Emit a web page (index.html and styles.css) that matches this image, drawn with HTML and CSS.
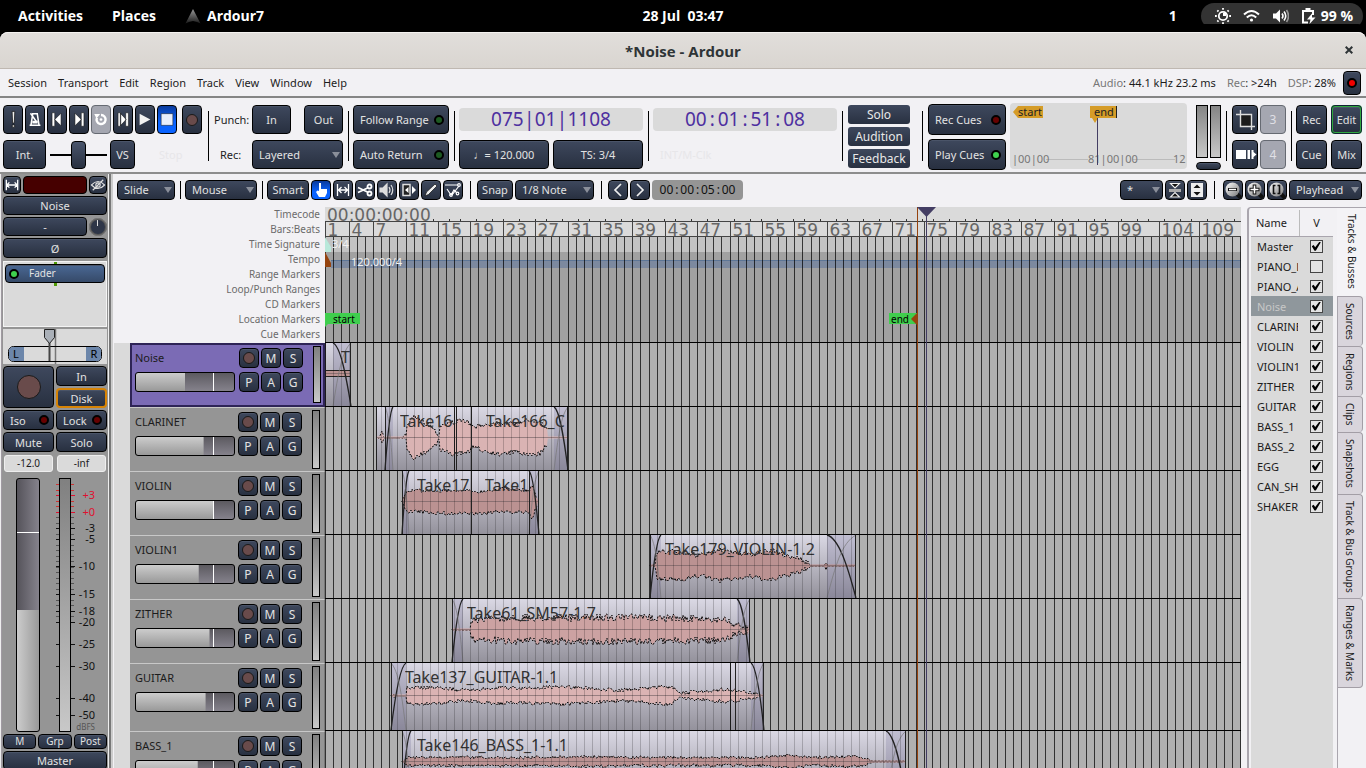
FILE: index.html
```html
<!DOCTYPE html>
<html lang="en">
<head>
<meta charset="utf-8">
<title>*Noise - Ardour</title>
<link rel="stylesheet" href="styles.css">
</head>
<body>
<header class="shell">
  <nav class="shell-left">
    <span>Activities</span><span>Places</span>
    <span class="app"><svg width="16" height="16" viewBox="0 0 16 16"><defs><linearGradient id="lg" x1="0" y1="0" x2="0" y2="1"><stop offset="0" stop-color="#999"/><stop offset="1" stop-color="#1a1a1a"/></linearGradient></defs><path d="M8 1L15.500 15.500L12 14L8 13L4 14L.5 15.500Z" fill="url(#lg)"/></svg>Ardour7</span>
  </nav>
  <time class="shell-clock">28 Jul&nbsp; 03:47</time>
  <div class="shell-right">
    <span>1</span>
    <span class="pill">
      <svg width="16" height="16" viewBox="0 0 16 16" fill="none" stroke="#fff"><circle cx="8" cy="8" r="4.200" stroke-width="1.800"/><path d="M8 5v3h3v-3z" fill="#fff" stroke="none"/><path d="M8 0v1.800M8 14.200v1.800M0 8h1.800M14.200 8h1.800M2.300 2.300l1.200 1.200M12.500 12.500l1.200 1.200M2.300 13.700l1.200-1.200M12.500 3.500l1.200-1.200" stroke-width="1.800"/></svg>
      <svg width="17" height="16" viewBox="0 0 17 16" fill="none" stroke="#fff" stroke-width="2"><path d="M1 6.500Q8.500-.5 16 6.500M3.800 9.500Q8.500 5 13.200 9.500"/><circle cx="8.500" cy="12" r="1.600" fill="#fff" stroke="none"/></svg>
      <svg width="17" height="16" viewBox="0 0 17 16" fill="none" stroke="#fff" stroke-width="1.600"><path d="M1 5.500h3l4-4v13l-4-4H1z" fill="#fff" stroke="none"/><path d="M10 5.500q2 2.500 0 5M12 3.500q3.500 4.500 0 9"/><path d="M14.500 2q4 6 0 12" stroke="#999"/></svg>
      <svg width="15" height="16" viewBox="0 0 15 16" fill="none" stroke="#fff" stroke-width="2"><path d="M7 14.500H2V3h10v4"/><path d="M4.500 1.200h5" stroke-width="2.400"/><path d="M11 5.500l-5 6h3.500l-1 4.500 6-6.500H11z" fill="#fff" stroke="none"/></svg>
      99 %
    </span>
  </div>
</header>
<div class="titlebar"><h1>*Noise - Ardour</h1><button class="close" aria-label="Close"><svg width="8" height="8" viewBox="0 0 8 8" stroke="#2e3436" stroke-width="2"><path d="M.7.7l6.600 6.600M7.300.7L.7 7.300"/></svg></button></div>
<div class="menubar">
  <nav class="menus"><button>Session</button><button>Transport</button><button>Edit</button><button>Region</button><button>Track</button><button>View</button><button>Window</button><button>Help</button></nav>
  <div class="status"><span><i>Audio</i>: 44.1 kHz 23.2 ms</span><span><i>Rec</i>: &gt;24h</span><span><i>DSP</i>: 28%</span><button class="btn led-btn" aria-label="Error log"><b class="led red"></b></button></div>
</div>

<section class="transport">
  <div class="group rolls">
    <div class="row">
      <button class="btn sq" aria-label="Panic"><svg viewBox="0 0 20 28"><path d="M9 5h3l-.6 13h-1.800zM9.200 20h2.600v2.500H9.200z" fill="#eee" stroke="#111" stroke-width=".8"/></svg></button>
      <button class="btn sq" aria-label="Metronome"><svg viewBox="0 0 20 28" fill="none" stroke="#fff" stroke-width="1.700"><path d="M7.500 7.500h5l2 13h-9zM4 20.500h12M12 17L5 7"/><path d="M7 17h6" stroke-width="3"/></svg></button>
      <button class="btn sq" aria-label="Go to start"><svg viewBox="0 0 20 28" fill="#fff" stroke="#111" stroke-width=".6"><path d="M4.500 6.500h3v15h-3zM14.500 7v14L7.500 14z"/></svg></button>
      <button class="btn sq" aria-label="Go to end"><svg viewBox="0 0 20 28" fill="#fff" stroke="#111" stroke-width=".6"><path d="M12.500 6.500h3v15h-3zM5.500 7v14l7-7z"/></svg></button>
      <button class="btn sq off" aria-label="Loop"><svg viewBox="0 0 20 28" fill="none" stroke="#fff" stroke-width="2.600"><path d="M5.500 12a5 5 0 1 0 4.500-3"/><circle cx="10" cy="14" r="1.500" fill="#fff" stroke="none"/><path d="M2.500 8l6.500 0-4 5z" fill="#fff" stroke="none"/></svg></button>
      <button class="btn sq" aria-label="Play range"><svg viewBox="0 0 20 28" fill="#fff" stroke="#111" stroke-width=".6"><path d="M4.500 6.500h3v15h-3zM13 6.500h3v15h-3zM7 7v14l6.500-7z"/></svg></button>
      <button class="btn sq" aria-label="Play"><svg viewBox="0 0 20 28"><path d="M4 7.500v13L16 14z" fill="#f2f2f2"/></svg></button>
      <button class="btn sq active" aria-label="Stop"><svg viewBox="0 0 20 28"><path d="M3.500 7.500h13v13h-13z" fill="#e8eefc" stroke="#222" stroke-width=".6"/></svg></button>
      <button class="btn sq rec" aria-label="Record"><b class="dot"></b></button>
    </div>
    <div class="row">
      <button class="btn int">Int.</button>
      <input class="shuttle" type="range" value="50" aria-label="Shuttle speed">
      <button class="btn vs">VS</button>
      <span class="ghost stop">Stop</span>
    </div>
  </div>
  <i class="sep"></i>
  <div class="group punch">
    <div class="row"><span class="lab">Punch:</span><button class="btn io">In</button><button class="btn io out">Out</button></div>
    <div class="row"><label class="lab" for="recmode">Rec:</label><span class="sel wide"><select id="recmode"><option>Layered</option></select></span></div>
  </div>
  <i class="sep"></i>
  <div class="group follow"><button class="btn lamp">Follow Range<b class="led dgreen"></b></button><button class="btn lamp">Auto Return<b class="led dgreen"></b></button></div>
  <i class="sep"></i>
  <div class="group clocks"><div class="clock">075<s>|</s>01<s>|</s>1108</div><div class="row pair"><button class="btn">♩= 120.000</button><button class="btn">TS: 3/4</button></div></div>
  <i class="sep"></i>
  <div class="group clocks"><div class="clock">00<s>:</s>01<s>:</s>51<s>:</s>08</div><span class="ghost mclk">INT/M-Clk</span></div>
  <i class="sep"></i>
  <div class="group alerts"><button>Solo</button><button>Audition</button><button>Feedback</button></div>
  <i class="sep cue-sep"></i>
  <div class="group cues"><button class="btn lamp">Rec Cues<b class="led dred"></b></button><button class="btn lamp">Play Cues<b class="led green"></b></button></div>
  <div class="mini">
    <svg width="100%" height="66" font-size="11">
      <path d="M36 56.500h42M123 56.500h42" stroke="#bbb"/>
      <g fill="#777"><text x="2" y="60">|00|00</text><text x="78" y="60">81|00|00</text><text x="163" y="60">12</text></g>
      <path d="M3 9l5-6h25v12H8zM80 3h27v12H88l-3 5-3-5h-2z" fill="#d59c28"/><path d="M106.500 3v12" stroke="#222"/>
      <g fill="#222"><text x="8" y="13">start</text><text x="84" y="13">end</text></g>
      <path d="M87.500 15v47" stroke="#433d63"/>
    </svg>
  </div>
  <div class="meters"><div class="row"><i></i><i></i></div><button class="btn peak" aria-label="Peak"></button></div>
  <i class="sep"></i>
  <div class="group quad">
    <button class="btn" aria-label="Crop"><svg width="24" height="26" viewBox="0 0 24 26"><path d="M7 7h11v12H7z" fill="#1b1b1b"/><path d="M3 7.500h15.500V23M7.500 3v16.500H22" fill="none" stroke="#ddd" stroke-width="1.400"/></svg></button><button class="btn off">3</button>
    <button class="btn" aria-label="Cue layout"><svg width="24" height="26" viewBox="0 0 24 26" fill="#fff"><path d="M3 8h10v9H3zM14.500 8h2.500v9h-2.500zM18.500 8h2v2l3 2.500-3 2.500v2h-2z"/></svg></button><button class="btn off">4</button>
  </div>
  <i class="sep"></i>
  <div class="group pages"><button class="btn">Rec</button><button class="btn on-green">Edit</button><button class="btn">Cue</button><button class="btn">Mix</button></div>
</section>

<main>
  <aside class="strip">
    <div class="row g2 top"><button class="btn mini-b" aria-label="Strip width"><svg viewBox="0 0 18 16" fill="none" stroke="#fff" stroke-width="1.500"><path d="M2.500 2v12M15.500 2v12M3 8h12M6 5L3 8l3 3M12 5l3 3-3 3"/></svg></button><button class="btn color" aria-label="Track colour"></button><button class="btn mini-b" aria-label="Hide"><svg viewBox="0 0 18 16" fill="none" stroke="#ddd" stroke-width="1.300"><path d="M1.500 8Q9 0 16.500 8Q9 16 1.500 8zM3 14L15 2"/><circle cx="9" cy="8" r="2.500"/></svg></button></div>
    <button class="btn h19">Noise</button>
    <div class="row g2"><button class="btn h19 grow">-</button><input type="range" class="knob" aria-label="Trim"></div>
    <button class="btn h19 phase">Ø</button>
    <div class="procs"><button class="btn lamp fader-proc"><b class="led green"></b>Fader</button></div>
    <div class="pan"><svg width="104" height="35" font-size="11" text-anchor="middle"><path d="M52.500 0v35" stroke="#777" stroke-width="1.500"/><rect x="5.500" y="17.500" width="93" height="15" rx="5" fill="none" stroke="#000"/><path d="M21 18H10q-4 0-4 4v6q0 4 4 4h11z" fill="#6c86aa"/><path d="M83 18h11q4 0 4 4v6q0 4-4 4H83z" fill="#6c86aa"/><path d="M21 17.500h62M21 32.500h62" stroke="#000"/><path d="M46.500 14v18" stroke="#444" stroke-width="2"/><path d="M41.500.5h10v8l-5 6-5-6z" fill="#aab0b8" stroke="#222"/><text x="13" y="29">L</text><text x="91" y="29">R</text></svg></div>
    <div class="recgrid"><button class="btn bigrec" aria-label="Record arm"><b class="dot big"></b></button><button class="btn">In</button><button class="btn on-orange">Disk</button></div>
    <div class="two"><button class="btn lamp">Iso<b class="led dred"></b></button><button class="btn lamp">Lock<b class="led dred"></b></button><button class="btn">Mute</button><button class="btn">Solo</button></div>
    <div class="two vals"><input value="-12.0" aria-label="Gain"><input value="-inf" aria-label="Peak level"></div>
    <div class="faders"><input type="range" class="vfader" value="48" aria-label="Fader level"><svg id="scale" width="50" height="254"></svg></div>
    <div class="three"><button class="btn">M</button><button class="btn">Grp</button><button class="btn">Post</button></div>
    <button class="btn h19">Master</button>
  </aside>

  <section class="editor">
    <div class="tools">
      <span class="sel s58"><select aria-label="Edit mode"><option>Slide</option></select></span><i class="sep"></i>
      <span class="sel s72"><select aria-label="Edit point"><option>Mouse</option></select></span><i class="sep"></i>
      <div class="row g2"><button class="btn s42">Smart</button>
      <button class="btn ic active" aria-label="Grab"><svg viewBox="0 0 20 20"><path d="M8 3h2v6h6v4l-2 4H8l-3-5 1.500-1.500L8 11z" fill="#fff"/></svg></button>
      <button class="btn ic" aria-label="Range"><svg viewBox="0 0 20 20" fill="none" stroke="#fff" stroke-width="1.300"><path d="M4.500 4v12M15.500 4v12M6 10h8M8.500 7L5.500 10l3 3M11.500 7l3 3-3 3"/></svg></button>
      <button class="btn ic" aria-label="Cut"><svg viewBox="0 0 20 20" fill="none" stroke="#fff" stroke-width="1.800"><circle cx="14.500" cy="6.500" r="2"/><circle cx="14.500" cy="13.500" r="2"/><path d="M12.500 8L3 12.500M12.500 12L3 7.500"/></svg></button>
      <button class="btn ic" aria-label="Audition"><svg viewBox="0 0 20 20" fill="none" stroke="#ddd" stroke-width="1.200"><path d="M3 8h3l4-4v12l-4-4H3z" fill="#ddd"/><path d="M12 7q2 3 0 6M14 5q3.500 5 0 10"/></svg></button>
      <button class="btn ic" aria-label="Stretch"><svg viewBox="0 0 20 20"><path d="M4 4.500h7v11H4z" fill="#222" stroke="#ddd" stroke-width="1.500"/><path d="M9.500 7v6l-3.500-3zM13 6v8l4-4z" fill="#fff"/></svg></button>
      <button class="btn ic" aria-label="Draw"><svg viewBox="0 0 20 20"><path d="M4 16l1.500-4L14 4l2 2-8.500 8.500z" fill="#eee" stroke="#111" stroke-width=".7"/></svg></button>
      <button class="btn ic" aria-label="Internal edit"><svg viewBox="0 0 20 20" fill="none" stroke="#fff" stroke-width="1.200"><path d="M2 5h13M4 9l4 6 3-5 3 3M9 15l7-9"/><circle cx="16" cy="5" r="1.300"/><circle cx="8" cy="15" r="1.300"/><circle cx="14.500" cy="13.500" r="1.300"/></svg></button></div>
      <i class="sep w6"></i>
      <div class="row g2"><button class="btn s36">Snap</button><span class="sel s79"><select aria-label="Grid"><option>1/8 Note</option></select></span></div>
      <i class="sep w6"></i>
      <div class="row g2"><button class="btn ic" aria-label="Nudge back"><svg viewBox="0 0 20 20"><path d="M13 4l-6 6 6 6" fill="none" stroke="#eee" stroke-width="1.700"/></svg></button><button class="btn ic" aria-label="Nudge forward"><svg viewBox="0 0 20 20"><path d="M7 4l6 6-6 6" fill="none" stroke="#eee" stroke-width="1.700"/></svg></button><div class="nudge">00<s>:</s>00<s>:</s>05<s>:</s>00</div></div>
      <div class="row g2 right"><span class="sel s43"><select aria-label="Visible tracks"><option>*</option></select></span>
      <button class="btn ic" aria-label="Shrink tracks"><svg viewBox="0 0 20 20"><path d="M4 9h12v3H4z" fill="#aaa"/><path d="M5.500 3.500h9L10 8zM5.500 17h9L10 12.500z" fill="#111" stroke="#eee" stroke-width="1.100"/></svg></button>
      <button class="btn ic" aria-label="Expand tracks"><svg viewBox="0 0 20 20"><path d="M4 3h12v14H4z" fill="#eee"/><path d="M6.500 8h7L10 4.500zM6.500 12h7L10 15.500z" fill="#111"/></svg></button></div>
      <i class="sep w8"></i>
      <div class="row g2"><button class="btn ic" aria-label="Zoom out"><svg viewBox="0 0 20 20"><defs><linearGradient id="zg" x1="0" y1="0" x2="1" y2="1"><stop offset="0" stop-color="#fff"/><stop offset="1" stop-color="#777"/></linearGradient></defs><path d="M13 13l5 5" stroke="#111" stroke-width="4"/><circle cx="9.500" cy="9.500" r="7" fill="url(#zg)"/><path d="M5 9.500h9" stroke="#111" stroke-width="3"/><path d="M6 9.500h7" stroke="#fff" stroke-width="1.300"/></svg></button>
      <button class="btn ic" aria-label="Zoom in"><svg viewBox="0 0 20 20"><path d="M13 13l5 5" stroke="#111" stroke-width="4"/><circle cx="9.500" cy="9.500" r="7" fill="url(#zg)"/><path d="M4.500 9.500h10M9.500 4.500v10" stroke="#111" stroke-width="3.600"/><path d="M5.500 9.500h8M9.500 5.500v8" stroke="#fff" stroke-width="1.600"/></svg></button>
      <button class="btn ic" aria-label="Zoom to session"><svg viewBox="0 0 20 20"><path d="M13 13l5 5" stroke="#111" stroke-width="4"/><circle cx="9.500" cy="9.500" r="7" fill="url(#zg)"/><path d="M8.500 5.500h-2v8h2M10.500 5.500h2v8h-2" fill="none" stroke="#111" stroke-width="1.600"/></svg></button>
      <span class="sel s73"><select aria-label="Zoom focus"><option>Playhead</option></select></span></div>
    </div>
    <div class="work">
      <div class="headers">
        <ul class="rulers"><li>Timecode</li><li>Bars:Beats</li><li>Time Signature</li><li>Tempo</li><li>Range Markers</li><li>Loop/Punch Ranges</li><li>CD Markers</li><li>Location Markers</li><li>Cue Markers</li></ul>
        <div class="tracks" id="tracks"></div>
      </div>
      <div class="canvas"><svg id="canvas" width="100%" height="100%"></svg></div>
      <aside class="side">
        <div class="listwrap"><table class="list"><thead><tr><th>Name</th><th>V</th></tr></thead><tbody id="list"></tbody></table></div>
        <div class="tabs" role="tablist"><button class="sel-tab" role="tab">Tracks &amp; Busses</button><button role="tab">Sources</button><button role="tab">Regions</button><button role="tab">Clips</button><button role="tab">Snapshots</button><button role="tab">Track &amp; Bus Groups</button><button role="tab">Ranges &amp; Marks</button></div>
      </aside>
    </div>
  </section>
</main>
<script src="app.js"></script>
</body>
</html>
```
FILE: styles.css
```css
* { box-sizing: border-box; }
body { margin: 0; height: 100vh; display: flex; flex-direction: column; overflow: hidden; background: #f2f1f4; color: #1c1c1c; font: 11px/15px "Noto Sans", "Open Sans", sans-serif; }
button, input, select { font: inherit; color: inherit; margin: 0; padding: 0; border: 0; background: none; }
svg { display: block; flex: none; }
s { text-decoration: none; }
.row { display: flex; align-items: center; }
.g2 { gap: 2px; }

.shell { flex: none; height: 32px; background: #000; color: #fff; display: grid; grid-template-columns: 1fr auto 1fr; align-items: center; font: 700 14px/20px "Open Sans", "Noto Sans", sans-serif; }
.shell-left { display: flex; gap: 29px; padding-left: 18px; }
.app { display: flex; align-items: center; gap: 6px; }
.shell-right { display: flex; justify-content: flex-end; align-items: center; gap: 24px; padding-right: 3px; }
.pill { display: flex; align-items: center; gap: 12px; height: 26px; padding: 0 10px 0 14px; border-radius: 13px; background: #333; }
.pill svg:last-of-type { margin-right: -7px; }

.titlebar { flex: none; height: 37px; display: flex; align-items: center; justify-content: center; position: relative; background: linear-gradient(#e1dedb, #d9d5d0); border-top: 1px solid #f4f2f0; border-bottom: 1px solid #bfb8b1; border-radius: 8px 8px 0 0; box-shadow: 0 -8px 0 #000; }
.titlebar h1 { margin: 0; font: 700 15px/20px "Open Sans", "Noto Sans", sans-serif; color: #2e3436; }
.close { position: absolute; right: 13px; top: 13px; }

.menubar { flex: none; height: 29px; display: flex; justify-content: space-between; align-items: center; border-bottom: 2px solid #858585; padding: 0 5px 0 8px; }
.menus { display: flex; gap: 11px; }
.status { display: flex; align-items: center; gap: 11px; }
.status i { font-style: normal; color: #777; }
.led-btn { width: 18px; height: 24px; margin-left: -4px; }

.btn { display: flex; align-items: center; justify-content: center; flex: none; background: linear-gradient(#3e485d, #283040); border: 1px solid #000; border-radius: 4px; color: #e2e2e2; box-shadow: inset 0 1px 0 #4a5468; white-space: nowrap; overflow: hidden; }
.btn.grow { flex: 1; }
.btn.active { background: linear-gradient(#0a3a9c, #0a63ff 60%); box-shadow: none; }
.btn.off { background: #a5a7b1; color: #e0e0e6; box-shadow: none; border-color: #666a72; }
.btn.on-green { border: 2px solid #2fa83f; outline: 1px solid #123; outline-offset: -1px; }
.btn.on-orange { border: 2px solid #d78405; }
.led { width: 10px; height: 10px; border-radius: 5px; border: 2px solid #000; background: #1d5a22; flex: none; }
.led.green { background: #3fd04e; }
.led.red { background: #f00000; }
.led.dred { background: #600; }
.dot { width: 12px; height: 12px; border-radius: 50%; background: #694b4b; border: 1px solid #1a1a1a; }
.dot.big { width: 24px; height: 24px; }
.lamp { justify-content: space-between; padding: 0 4px 0 6px; }
.sep { width: 1px; background: #000; align-self: center; flex: none; }

.transport { flex: none; height: 76px; display: flex; padding: 7px 4px 0 3px; border-bottom: 2px solid #8d8d8d; }
.transport .sep { height: 50px; margin: 0 4px 5px 5px; }
.transport .group { height: 64px; display: flex; flex-direction: column; gap: 6px; flex: none; }
.rolls { width: 200px; }
.transport .row { height: 29px; }
.rolls .row:first-child { gap: 2px; }
.sq { width: 20px; height: 29px; }
.sq svg { width: 18px; height: 27px; }
.rec { margin-left: 3px; }
.int { width: 43px; height: 29px; }
.vs { width: 25px; height: 29px; }
.shuttle { appearance: none; width: 57px; height: 29px; margin: 0 3px 0 4px; background: linear-gradient(#000, #000) center / 100% 2px no-repeat; }
.shuttle::-webkit-slider-thumb { appearance: none; width: 15px; height: 28px; border-radius: 4px; border: 1px solid #000; background: linear-gradient(#4a556c, #283040); }
.ghost { color: #e7e6e9; }
.stop { margin-left: 24px; }
.punch { width: 130px; }
.punch .lab { width: 39px; flex: none; padding-left: 1px; }
.punch label.lab { padding-left: 7px; }
.io { width: 39px; height: 29px; }
.out { margin-left: auto; }
.sel { position: relative; display: flex; height: 20px; flex: none; }
.sel::after { content: ""; position: absolute; right: 3px; top: 50%; margin-top: -3px; border: 4px solid transparent; border-top: 6px solid #8a8f9a; border-bottom: 0; pointer-events: none; }
.sel select { appearance: none; width: 100%; height: 100%; padding: 0 10px 0 6px; background: linear-gradient(#3e485d, #283040); border: 1px solid #000; border-radius: 4px; color: #e2e2e2; }
.wide { width: 91px; height: 29px; }
.follow { width: 96px; }
.follow .btn { height: 29px; }
.clocks { width: 184px; }
.clock { margin-top: 3px; height: 23px; border-radius: 4px; background: #dadada; color: #4d2fa0; font-size: 19px; line-height: 23px; text-align: center; }
.clock s, .nudge s { display: inline-block; width: 11px; text-align: center; }
.clocks .pair { gap: 4px; margin-top: 3px; }
.pair .btn { flex: 1; height: 29px; }
.mclk { margin: 10px 0 0 7px; }
.transport .alerts { gap: 3px; margin-left: 1px; width: 62px; }
.alerts button { height: 19px; border-radius: 3px; font-size: 12px; color: #e8e8e8; background: linear-gradient(#3e485d, #283040); }
.transport .cue-sep { margin-left: 12px; }
.transport .cues { width: 78px; gap: 4px; margin: -1px 0 0 1px; }
.cues .btn { height: 31px; }
.mini { flex: 1; min-width: 100px; margin: -2px 9px 0 4px; height: 66px; background: #dadada; border-radius: 4px; overflow: hidden; }
.meters { width: 25px; flex: none; }
.meters .row { height: 53px; gap: 2px; }
.meters i { flex: 1; height: 53px; border: 1px solid #000; background: linear-gradient(#858585, #c8c8c8); }
.peak { width: 25px; height: 8px; margin-top: 4px; }
.transport .quad, .transport .pages { display: grid; gap: 6px 2px; grid-template: 29px 29px / 26px 26px; margin-left: 1px; font-size: 12px; }
.transport .pages { grid-template-columns: 31px 31px; column-gap: 4px; margin-left: 0; font-size: 11px; }

main { flex: 1; min-height: 0; display: flex; overflow: hidden; }
.strip { flex: none; width: 113px; padding: 2px 6px 0 3px; background: linear-gradient(90deg, #eee 0 1px, #a09aa2 1px 2px, #959595 2px 108px, #eee 108px 109px, #777 109px 111px, #ccc 111px); display: flex; flex-direction: column; gap: 2px; overflow: hidden; }
.strip .top, .strip .top .btn { height: 18px; }
.mini-b { width: 18px; }
.mini-b svg { width: 16px; height: 14px; }
.btn.color { flex: 1; background: #460000; box-shadow: none; }
.h19 { height: 19px; }
.phase { height: 20px; }
.knob { appearance: none; width: 18px; height: 18px; border-radius: 50%; border: 2px solid #555; outline: 1px solid #777; outline-offset: -1px; background: linear-gradient(90deg, transparent 6px, #ddd 6px 7px, transparent 7px) top / 100% 6px no-repeat, #2e3648; }
.knob::-webkit-slider-thumb { appearance: none; width: 0; height: 0; }
.procs { margin-top: 1px; height: 66px; flex: none; border: 1px solid #f4f4f4; padding: 2px 1px; background: linear-gradient(#4e9a06, #4e9a06) 50% 0 / 3px 24px no-repeat, #dadada; }
.fader-proc { width: 100%; height: 19px; justify-content: flex-start; gap: 10px; padding-left: 3px; background: linear-gradient(#4a6894, #364a69); font-size: 10px; }
.pan { height: 35px; flex: none; background: #dadada; }
.recgrid { display: grid; flex: none; grid-template: 20px 20px / 1fr 1fr; gap: 2px; }
.bigrec { grid-row: 1 / 3; }
.two { display: grid; flex: none; grid-template-columns: 1fr 1fr; grid-auto-rows: 20px; gap: 2px; }
.two .led { margin-left: auto; }
.vals { grid-auto-rows: 17px; padding: 1px 1px 4px; gap: 4px; }
.vals input { min-width: 0; text-align: center; font-size: 10px; background: #dadada; border: 1px solid #eee; border-radius: 3px; }
.faders { display: flex; gap: 12px; padding-left: 13px; flex: none; }
.vfader { appearance: none; width: 24px; height: 254px; border: 1px solid #000; border-radius: 3px; background: linear-gradient(#fff, #fff) 0 53px / 100% 1px no-repeat, linear-gradient(90deg, #ccc, #999) 0 131px / 100% 122px no-repeat, linear-gradient(90deg, #55535a, #85828c); }
.vfader::-webkit-slider-thumb { appearance: none; width: 0; height: 0; }
.three { display: grid; flex: none; grid-template-columns: 1fr 1fr 1fr; gap: 2px; grid-auto-rows: 15px; font-size: 10px; }

.editor { flex: 1; min-width: 0; display: flex; flex-direction: column; }
.tools { flex: none; height: 33px; display: flex; align-items: center; padding: 0 4px 2px; gap: 0; }
.tools .btn { height: 20px; }
.tools .sep { height: 18px; margin: 0 4px 0 5px; }
.tools .w6 { margin: 0 6px 0 7px; }
.tools .w8 { margin: 0 8px 0 7px; }
.tools .ic { width: 20px; }
.ic svg { width: 20px; height: 20px; margin: -1px; }
.s58 { width: 58px; }
.s72 { width: 72px; }
.s42 { width: 42px; }
.s36 { width: 36px; }
.s79 { width: 79px; }
.s43 { width: 43px; }
.s73 { width: 73px; }
.nudge { width: 91px; height: 20px; border-radius: 4px; background: #959595; color: #111; text-align: center; font-size: 12px; line-height: 20px; }
.nudge s { width: 7px; }
.right { margin-left: auto; }

.work { flex: 1; min-height: 0; display: flex; padding-left: 1px; }
.headers { width: 211px; flex: none; overflow: hidden; }
.rulers { list-style: none; margin: 0; padding: 0 5px 0 0; text-align: right; color: #6b6b6b; font-size: 10px; }
.tracks { padding: 0 0 0 16px; background: #dadada; }
.track { height: 64px; display: grid; grid-template-columns: 1fr auto 8px; gap: 10px; padding: 4px 4px 0 5px; background: #959595; border-top: 1px solid #c8c8c8; border-right: 1px solid #777; }
.track.tall { height: 68px; }
.track.current { margin-top: 1px; border: 2px solid #2e2456; padding: 3px 2px 0 3px; background: #7b6bb5; }
.track .left { display: flex; flex-direction: column; gap: 6px; width: 93px; }
.track .name { height: 18px; line-height: 20px; }
.hfader { appearance: none; width: 100px; height: 20px; border: 1px solid #000; border-radius: 3px; background: linear-gradient(#fff, #fff) 77px 0 / 1px 100% no-repeat, linear-gradient(#ccc, #999) 0 0 / var(--level) 100% no-repeat, linear-gradient(#5c5a60, #85828c); }
.hfader::-webkit-slider-thumb { appearance: none; width: 0; height: 0; }
.tb { display: grid; grid-template: 20px 20px / 20px 20px 20px; gap: 4px 2px; }
.tb .btn { font-size: 12px; }
.tmeter { border: 1px solid #000; background: linear-gradient(#808080, #c8c8c8); margin: -2px 0 2px; }
.canvas { flex: 1; min-width: 0; overflow: hidden; background: #b0b0b0; }

.side { width: 119px; margin-left: 6px; flex: none; display: flex; border: 1px solid #aaa6ae; border-width: 1px 0 0 2px; border-radius: 4px 0 0 0; }
.listwrap { width: 82px; margin: 2px 4px 0 2px; background: #dadada; overflow: hidden; }
.list { border-collapse: collapse; table-layout: fixed; width: 100%; }
.list th { height: 26px; font-weight: 400; background: #f2f1f4; border-bottom: 1px solid #a9a5ad; text-align: left; padding: 0 0 0 5px; width: 48px; }
.list th + th { text-align: center; width: 33px; padding: 0; border-left: 1px solid #bbb; }
.list td { height: 20px; padding: 0 0 0 6px; }
.list .cell { display: block; width: 41px; overflow: hidden; white-space: nowrap; }
.list td + td { padding: 0; text-align: center; }
.list .hot { background: #8f979c; color: #c8c8c8; }
.list input { appearance: none; display: block; width: 13px; height: 13px; margin: 0 auto; border: 1px solid #444; background: #e4e4e4; }
.list input:checked::after { content: ""; display: block; width: 9px; height: 9px; margin: 1px; background: #000; clip-path: polygon(0 50%, 20% 35%, 38% 62%, 85% 0, 100% 5%, 45% 100%, 30% 100%); }
.tabs { flex: 1; display: flex; flex-direction: column; align-items: flex-start; border-left: 1px solid #aaa6ae; }
.tabs button { writing-mode: vertical-rl; width: 25px; padding: 6px 5px; font-size: 10px; line-height: 15px; background: #d9d5dc; border: 1px solid #a39ea6; border-left: 0; border-bottom: 0; border-radius: 0 4px 4px 0; white-space: nowrap; text-align: left; }
.tabs .sel-tab { width: 29px; background: #f4f3f6; border: 0; border-radius: 0; margin-left: -1px; padding: 6px 6px 7px; }
.tabs button:last-child { border-bottom: 1px solid #a39ea6; }
```
FILE: app.js
```js
const names = ['Noise', 'CLARINET', 'VIOLIN', 'VIOLIN1', 'ZITHER', 'GUITAR', 'BASS_1'];
const levels = [50, 69, 79, 64, 75, 71, 63];
document.getElementById('tracks').innerHTML = names.map((n, i) => `
<div class="track${i === 0 ? ' current' : ''}${n === 'GUITAR' ? ' tall' : ''}">
  <div class="left"><span class="name">${n}</span><input type="range" class="hfader" aria-label="${n} level" style="--level:${levels[i]}%"></div>
  <div class="tb"><button class="btn" aria-label="Record ${n}"><b class="dot"></b></button><button class="btn">M</button><button class="btn">S</button><button class="btn">P</button><button class="btn">A</button><button class="btn">G</button></div>
  <i class="tmeter"></i>
</div>`).join('');

const list = ['Master', 'PIANO_L', 'PIANO_A', 'Noise', 'CLARINET', 'VIOLIN', 'VIOLIN1', 'ZITHER', 'GUITAR', 'BASS_1', 'BASS_2', 'EGG', 'CAN_SHAKE', 'SHAKER'];
document.getElementById('list').innerHTML = list.map((n, i) =>
  `<tr${i === 3 ? ' class="hot"' : ''}><td><label class="cell" for="v${i}">${n}</label></td><td><input type="checkbox" id="v${i}"${i === 1 ? '' : ' checked'}></td></tr>`).join('');

// Level meter with its dB scale; offsets are measured from the top of the meter.
const marks = [['+3', 17], ['+0', 34], ['-3', 50], ['-5', 61], ['-10', 88], ['-15', 116], ['-18', 133], ['-20', 144], ['-25', 166], ['-30', 188], ['-40', 220], ['-50', 237]];
let sc = '<defs><linearGradient id="mg" x1="0" y1="0" x2="0" y2="1"><stop offset="0" stop-color="#808080"/><stop offset="1" stop-color="#c8c8c8"/></linearGradient></defs>';
for (let y = 6; y < 144; y += 5.5) sc += `<path d="M4 ${Math.round(y) + .5}h18" stroke="${y < 35 ? '#c33' : '#555'}"/>`;
for (const [t, y] of marks) {
  const c = t[0] === '+' ? '#e01030' : '#111';
  sc += `<path d="M4 ${y + .5}h19" stroke="${c}"/><text x="43" y="${y + 4}" text-anchor="end" font-size="11" fill="${c}">${t}</text>`;
}
sc += '<text x="43" y="252" text-anchor="end" font-size="8" fill="#555">dBFS</text><rect x="7.500" y=".5" width="11" height="253" fill="url(#mg)" stroke="#000"/>';
document.getElementById('scale').innerHTML = sc;

// Timeline. X0/Y0 is the window position of the canvas origin; BAR is the width of one bar.
const canvas = document.getElementById('canvas');
const X0 = 325, Y0 = 207, BAR = 8.1;
const RIGHT = X0 + canvas.parentElement.clientWidth, BOTTOM = Y0 + canvas.parentElement.clientHeight;
const COUNT = Math.ceil((RIGHT - X0) / BAR);
let seed = 7;
const rnd = () => (seed = (seed * 16807) % 2147483647) / 2147483647;
let s = `<defs><linearGradient id="rg" x1="0" y1="0" x2="0" y2="1"><stop offset="0" stop-color="#dad8e4"/><stop offset="1" stop-color="#94929c"/></linearGradient></defs><g transform="translate(${-X0} ${-Y0})">`;
const rect = (x, y, w, h, f, o = '') => `<rect x="${x}" y="${y}" width="${w}" height="${h}" fill="${f}" ${o}/>`;
const barX = k => X0 + Math.floor(k * BAR) + .5;
const W = RIGHT - X0;
s += rect(X0, 207, W, 30, '#dadada') + rect(X0, 237, W, 15, '#c3c3c3') + rect(X0, 252, W, 91, '#a1a1a1') + rect(331, 260, W, 8, '#7c899f');
s += `<path d="M331 260.500H${RIGHT}" stroke="#5c7596"/>`;
let grid = '';
for (let k = 0; k < COUNT; k++) grid += `M${barX(k)} 237V${BOTTOM}`;
s += `<path d="${grid}" stroke="#000" stroke-opacity=".72"/>`;
s += `<path d="M325 221.500H${RIGHT}M325 236.500H${RIGHT}" stroke="#444"/>`;
const bars = [1, 4];
for (let b = 7; b <= 99; b += 4) bars.push(b);
for (let b = 104; b < COUNT; b += 5) bars.push(b);
s += '<g font-family="DejaVu Sans" font-size="17" fill="#666">';
s += '<text x="327" y="221">00:00:00:00</text>';
for (const b of bars) s += `<path d="M${barX(b - 1)} 222v14" stroke="#444"/><text x="${barX(b - 1) + 2}" y="236">${b}</text>`;
s += '</g>';
let x = 433, ticks = '';
for (let i = 0; x < RIGHT; i++) { ticks += `M${x}.5 219v2`; x += i % 3 === 1 ? 11 : 16; }
s += `<path d="${ticks}" stroke="#333"/>`;
s += '<path d="M325 237l6 10v5h-6z" fill="#b8e8da"/><path d="M325 252l6 11v4h-6z" fill="#95430e"/>';
s += '<g fill="#f2f2f2" font-size="11"><text x="332" y="248">3/4</text><text x="351" y="266">120.000/4</text></g>';
s += '<path d="M325 313h35v11h-32l-3 3z" fill="#3fce4d"/><text x="333" y="323" font-size="10">start</text>';
s += '<path d="M889 313h28v11h-28z" fill="#3fce4d"/><text x="891" y="323" font-size="10">end</text><path d="M917 313v12l-6-6z" fill="#95430e"/>';
const lanes = [342, 406, 470, 534, 598, 662, 730, 798];
s += `<path d="${lanes.map(y => `M325 ${y}.5H${RIGHT}`).join('')}" stroke="#000"/>`;

function wave(cy, pts, color, jag) {
  let up = '', dn = [];
  for (let i = 0; i < pts.length - 1; i++) {
    const [xa, ta, ba = ta] = pts[i], [xb, tb, bb = tb] = pts[i + 1];
    for (let px = xa; px < xb; px++) {
      const f = (px - xa) / (xb - xa);
      const t = ta + (tb - ta) * f, b = ba + (bb - ba) * f;
      const n = t > 1.5 ? jag : 0;
      up += `L${px} ${Math.round(cy - t + (rnd() - .5) * n)}`;
      dn.push(`L${px} ${Math.round(cy + b + (rnd() - .5) * n)}`);
    }
  }
  const start = pts[0][0], end = pts[pts.length - 1][0];
  const edge = `M${start} ${cy}${up}M${start} ${cy}${dn.join('')}`;
  return `<path d="M${start} ${cy}${up}L${end} ${cy}${dn.slice().reverse().join('')}Z" fill="${color}"/>` +
    (jag ? `<path d="${edge}" fill="none" stroke="#111" stroke-width="1" stroke-dasharray="2 1.500"/>` : '');
}
function region(r) {
  const { x1, x2, y1, y2, fin, fout, cuts = [], labels, cy, pts, color, jag } = r;
  let o = rect(x1, y1, x2 - x1, y2 - y1, 'url(#rg)');
  if (fin) o += rect(fin[0], y1, fin[1] - fin[0], y2 - y1, '#6a6490', 'fill-opacity=".22"');
  if (fout) o += rect(fout, y1, x2 - fout, y2 - y1, '#6a6490', 'fill-opacity=".22"');
  o += wave(cy, pts, color, jag) + rect(x1, cy - 1, x2 - x1, 2, color);
  if (!jag) o += `<path d="M${x1} ${cy - 3}H${x2}M${x1} ${cy + 3}H${x2}" stroke="#222"/>`;
  o += `<path d="M${x1} ${cy}H${x2}" stroke="#6b5a5e" stroke-opacity=".6"/>`;
  if (fin) {
    const [a, b] = fin, w = b - a;
    o += `<path d="M${a} ${y2}C${a + w * .3} ${y1 + 30} ${a + w * .6} ${y1 + 3} ${b} ${y1}" fill="none" stroke="#222" stroke-width="1.300"/>`;
    o += `<path d="M${a} ${y1}C${a + w * .5} ${y1 + 8} ${a + w * .7} ${y1 + 30} ${b} ${y2}" fill="none" stroke="#777" stroke-opacity=".7"/>`;
  }
  if (fout) {
    const w = x2 - fout;
    o += `<path d="M${fout} ${y1}C${fout + w * .4} ${y1 + 3} ${fout + w * .7} ${y1 + 30} ${x2} ${y2}" fill="none" stroke="#222" stroke-width="1.300"/>`;
    o += `<path d="M${fout} ${y2}C${fout + w * .3} ${y1 + 30} ${fout + w * .5} ${y1 + 8} ${x2} ${y1}" fill="none" stroke="#777" stroke-opacity=".7"/>`;
  }
  for (const c of [x1, x2 - 1, ...cuts]) o += `<path d="M${c + .5} ${y1}V${y2}" stroke="#222"/>`;
  for (const [t, lx, end] of labels) o += `<svg x="${lx}" y="${y1}" width="${(end || x2) - lx}" height="30"><text x="0" y="20" font-size="16" fill="#333">${t}</text></svg>`;
  return o;
}
const dark = '#bb9292', mid = '#cca2a2', pale = '#dab3b3';
const regions = [
  { x1: 325, x2: 351, y1: 343, y2: 406, fout: 333, labels: [['T', 341]], cy: 373.5, color: dark, jag: 0, pts: [[325, 2.5], [350, 2.5]] },
  { x1: 376, x2: 568, y1: 407, y2: 470, fin: [385, 393], fout: 554, cuts: [385, 454, 456, 471], labels: [['Take16', 400, 454], ['Take166_C', 486]], cy: 437.5, color: pale, jag: 5,
    pts: [[378, 0], [380, 2], [382, 6], [384, 0], [400, 0], [406, 2], [407, 13], [414, 20], [425, 15], [434, 9], [439, 1], [440, 12], [452, 15, 17], [466, 17, 15], [473, 10], [485, 13], [500, 15, 17], [515, 14], [530, 18], [540, 16], [547, 8], [548, 0]] },
  { x1: 402, x2: 539, y1: 471, y2: 534, fin: [402, 409], fout: 529, cuts: [471, 529], labels: [['Take17', 417, 471], ['Take1', 485, 529]], cy: 501.5, color: dark, jag: 4,
    pts: [[402, 0], [404, 4], [407, 11, 10], [450, 11, 12], [480, 10, 12], [500, 13, 10], [529, 11], [532, 16, 19], [535, 9], [538, 1]] },
  { x1: 650, x2: 856, y1: 535, y2: 598, fin: [650, 661], fout: 827, labels: [['Take179_VIOLIN-1.2', 665]], cy: 565.5, color: dark, jag: 5,
    pts: [[650, 0], [655, 1], [657, 14], [680, 14], [700, 10], [720, 15], [750, 11], [770, 15], [790, 9], [800, 7], [810, 1], [811, 0], [824, 0], [826, 3], [828, 0], [855, 0]] },
  { x1: 452, x2: 750, y1: 599, y2: 662, fin: [452, 463], fout: 737, labels: [['Take61_SM57-1.7', 467]], cy: 629.5, color: mid, jag: 8,
    pts: [[452, 0], [470, 0], [471, 10], [500, 11], [580, 12], [650, 12], [725, 10], [735, 4], [745, 2], [749, 2]] },
  { x1: 391, x2: 764, y1: 663, y2: 730, fin: [391, 406], fout: 751, cuts: [730, 735], labels: [['Take137_GUITAR-1.1', 405]], cy: 695.5, color: pale, jag: 4,
    pts: [[391, 0], [394, 2], [397, 0], [406, 0], [407, 8], [440, 8], [460, 5], [500, 8], [520, 7], [560, 9], [620, 5], [665, 9], [672, 8], [680, 2], [700, 4], [725, 6], [745, 4], [755, 2], [763, 0]] },
  { x1: 402, x2: 906, y1: 731, y2: 798, fin: [402, 411], fout: 886, labels: [['Take146_BASS_1-1.1', 417]], cy: 761.5, color: dark, jag: 3,
    pts: [[402, 0], [406, 4], [510, 4], [590, 5], [620, 4], [760, 4], [790, 6], [810, 4], [860, 5], [872, 1], [905, 0]] }
];
for (const r of regions) {
  s += region(r);
  let lines = '';
  for (let k = 0; k < COUNT; k++) if (barX(k) > r.x1 && barX(k) < r.x2) lines += `M${barX(k)} ${r.y1}V${r.y2}`;
  s += `<path d="${lines}" stroke="#000" stroke-opacity=".2"/>`;
}
s += `<path d="M917.500 207V${BOTTOM}" stroke="#95430e"/><path d="M926.500 207V${BOTTOM}" stroke="#433d63"/><path d="M917 207h19l-9.500 10z" fill="#433d63"/></g>`;
canvas.innerHTML = s;
```
